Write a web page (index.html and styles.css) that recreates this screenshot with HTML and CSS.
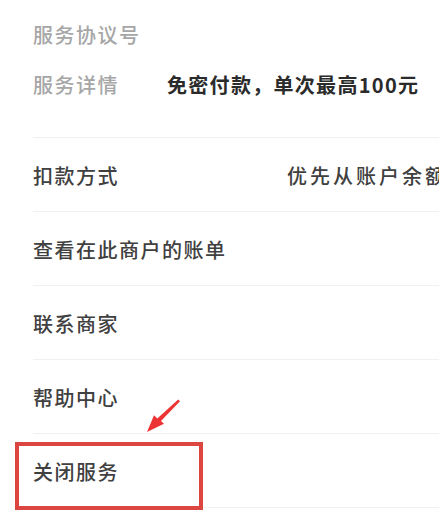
FILE: index.html
```html
<!DOCTYPE html>
<html lang="zh-CN">
<head>
<meta charset="utf-8">
<title>服务详情</title>
<link rel="stylesheet" href="styles.css">
</head>
<body>
<div class="page">
  <section class="info">
    <div class="info-row"><span class="info-label">服务协议号</span></div>
    <div class="info-row"><span class="info-label">服务详情</span><span class="info-value">免密付款，单次最高100元</span></div>
  </section>
  <ul class="menu">
    <li class="menu-item"><span class="menu-label">扣款方式</span><span class="menu-value">优先从账户余额</span></li>
    <li class="menu-item"><span class="menu-label">查看在此商户的账单</span></li>
    <li class="menu-item"><span class="menu-label">联系商家</span></li>
    <li class="menu-item"><span class="menu-label">帮助中心</span></li>
    <li class="menu-item menu-item--marked"><span class="menu-label">关闭服务</span><span class="mark-box"></span></li>
  </ul>
  <svg class="mark-arrow" width="40" height="36" viewBox="0 0 40 36">
    <polygon points="32.2,1.4 34,3.2 15,23 18,25.8 1,34 8,17.3 11.3,20.4" fill="#ec3434"/>
  </svg>
</div>
</body>
</html>
```

FILE: styles.css
```css
html, body {
  margin: 0;
  padding: 0;
  background: #ffffff;
  overflow: hidden;
}

.page {
  position: relative;
  width: 439px;
  height: 527px;
  overflow: hidden;
  font-family: "Noto Sans CJK SC", "Noto Sans", sans-serif;
  font-size: 20px;
  letter-spacing: 1.5px;
  white-space: nowrap;
}

.info {
  margin-left: 33px;
  padding: 21px 0 38px;
  border-bottom: 1px solid #f1f1f1;
  display: flex;
  flex-direction: column;
  gap: 22px;
}

.info-row {
  display: grid;
  grid-template-columns: 134px auto;
  height: 28px;
  line-height: 28px;
}

.info-label {
  color: #a6a6a6;
  font-weight: 500;
}

.info-value {
  color: #2b2b2b;
  font-weight: 600;
  letter-spacing: 1.3px;
}

.menu {
  list-style: none;
  margin: 0;
  padding: 0;
}

.menu-item {
  margin-left: 33px;
  border-bottom: 1px solid #f1f1f1;
  display: flex;
  align-items: center;
  padding-top: 2px;
  height: 71px;
}

.menu-label {
  color: #404040;
  font-weight: 500;
  width: 254px;
  flex: none;
}

.menu-value {
  color: #404040;
  font-weight: 500;
  letter-spacing: 3px;
}

.menu-item--marked {
  position: relative;
}

.mark-box {
  position: absolute;
  left: -18px;
  top: 8px;
  width: 188px;
  height: 68px;
  box-sizing: border-box;
  border: 4px solid #dc4540;
}

.mark-arrow {
  position: absolute;
  left: 146px;
  top: 398px;
}
```
